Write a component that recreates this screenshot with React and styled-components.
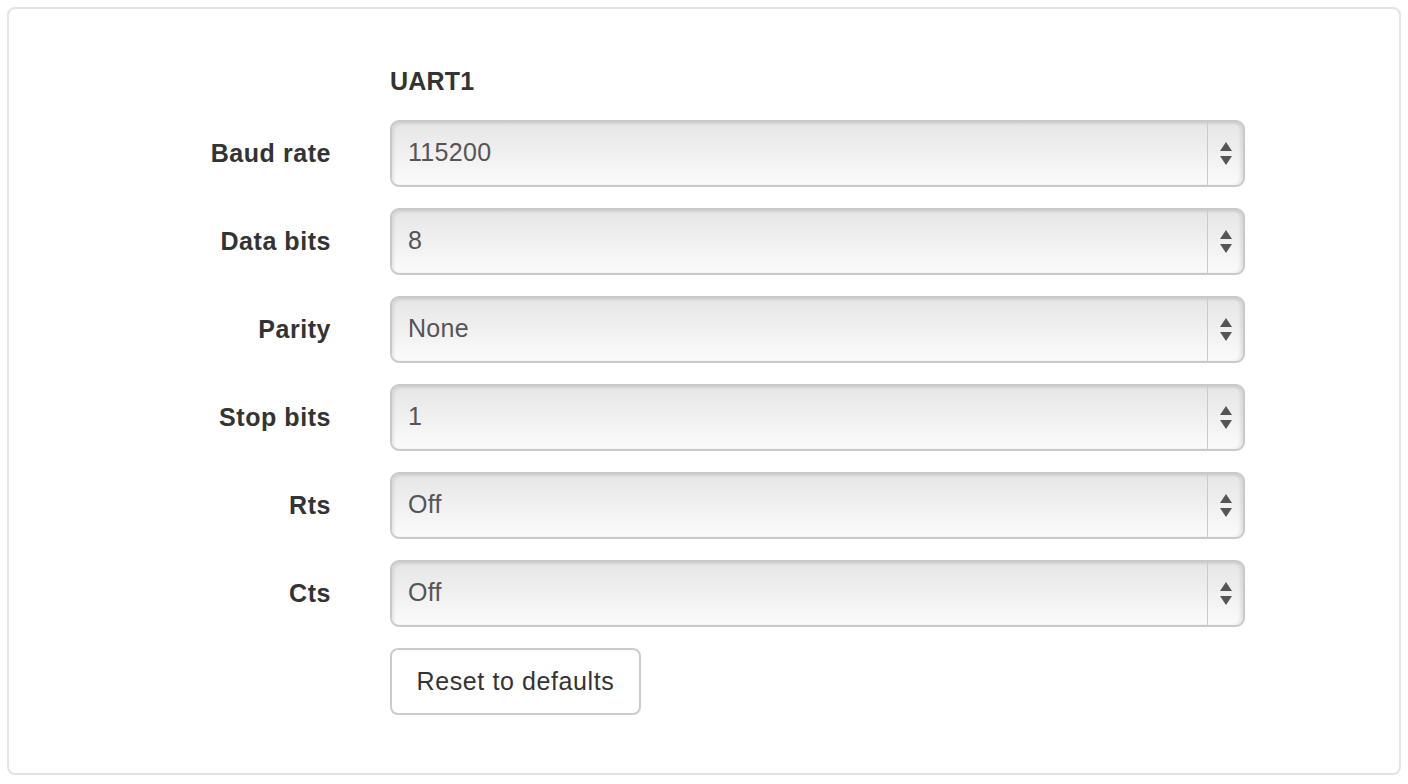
import styled, { createGlobalStyle } from "styled-components";
import { useState, Fragment } from "react";

const GlobalStyle = createGlobalStyle`
  html, body {
    margin: 0;
    padding: 0;
    background: #ffffff;
  }
  body {
    font-family: "Liberation Sans", Helvetica, Arial, sans-serif;
    color: #333333;
  }
`

const Panel = styled.div`
  box-sizing: border-box;
  margin: 7px;
  width: 1394px;
  height: 768px;
  border: 2px solid #e3e3e3;
  border-radius: 8px;
  background: #ffffff;
  padding: 52px 0 0 0;
`

const Form = styled.form`
  display: grid;
  grid-template-columns: 322px 855px;
  column-gap: 59px;
  row-gap: 21px;
  align-items: center;
`

const Title = styled.h3`
  grid-column: 2;
  margin: 0 0 -2px 0;
  font-size: 25px;
  font-weight: bold;
  letter-spacing: 0.2px;
  line-height: 40px;
  color: #333333;
`

const Label = styled.label`
  grid-column: 1;
  text-align: right;
  font-size: 25px;
  font-weight: bold;
  letter-spacing: 0.55px;
  color: #333333;
`

const SelectShell = styled.div`
  grid-column: 2;
  box-sizing: border-box;
  display: flex;
  height: 67px;
  border: 2px solid #c9c9c9;
  border-radius: 9px;
  overflow: hidden;
  background: linear-gradient(to bottom, #e6e6e6 0%, #eeeeee 40%, #fbfbfb 100%);
  box-shadow: inset 2px 2px 3px rgba(0, 0, 0, 0.08), inset -3px 0 3px rgba(0, 0, 0, 0.08);
`

const NativeSelect = styled.select`
  flex: 1;
  appearance: none;
  -webkit-appearance: none;
  border: none;
  background: transparent;
  padding: 0 0 3px 16px;
  font-family: "Liberation Sans", Helvetica, Arial, sans-serif;
  font-size: 25px;
  letter-spacing: 0.3px;
  color: #555555;
  outline: none;
`

const ArrowCell = styled.div`
  width: 35px;
  border-left: 1px solid #c9c9c9;
  display: flex;
  flex-direction: column;
  align-items: center;
  justify-content: center;
  gap: 5px;
`

const Triangle = styled.span`
  width: 0;
  height: 0;
  border-left: 6px solid transparent;
  border-right: 6px solid transparent;
  ${({ $up }) => ($up ? "border-bottom: 9px solid #555;" : "border-top: 9px solid #555;")}
`

const ResetButton = styled.button`
  grid-column: 2;
  justify-self: start;
  box-sizing: border-box;
  width: 251px;
  height: 67px;
  padding: 0;
  border: 2px solid #cccccc;
  border-radius: 8px;
  background: #ffffff;
  font-family: "Liberation Sans", Helvetica, Arial, sans-serif;
  font-size: 25px;
  letter-spacing: 0.6px;
  color: #333333;
  cursor: pointer;
`

const DEFAULTS = {
  baud: "115200",
  dataBits: "8",
  parity: "None",
  stopBits: "1",
  rts: "Off",
  cts: "Off",
}

const FIELDS = [
  { key: "baud", label: "Baud rate", options: ["9600", "19200", "38400", "57600", "115200"] },
  { key: "dataBits", label: "Data bits", options: ["5", "6", "7", "8"] },
  { key: "parity", label: "Parity", options: ["None", "Even", "Odd"] },
  { key: "stopBits", label: "Stop bits", options: ["1", "2"] },
  { key: "rts", label: "Rts", options: ["Off", "On"] },
  { key: "cts", label: "Cts", options: ["Off", "On"] },
]

function Select({ id, value, options, onChange }) {
  return (
    <SelectShell>
      <NativeSelect id={id} value={value} onChange={onChange}>
        {options.map((o) => (
          <option key={o} value={o}>{o}</option>
        ))}
      </NativeSelect>
      <ArrowCell>
        <Triangle $up />
        <Triangle />
      </ArrowCell>
    </SelectShell>
  )
}

export default function App() {
  const [values, setValues] = useState(DEFAULTS);

  return (
    <>
      <GlobalStyle />
      <Panel>
        <Form onSubmit={(e) => e.preventDefault()}>
          <Title>UART1</Title>
          {FIELDS.map((f) => (
            <Fragment key={f.key}>
              <Label htmlFor={f.key}>{f.label}</Label>
              <Select
                id={f.key}
                value={values[f.key]}
                options={f.options}
                onChange={(e) => setValues({ ...values, [f.key]: e.target.value })}
              />
            </Fragment>
          ))}
          <ResetButton type="button" onClick={() => setValues(DEFAULTS)}>
            Reset to defaults
          </ResetButton>
        </Form>
      </Panel>
    </>
  );
}
